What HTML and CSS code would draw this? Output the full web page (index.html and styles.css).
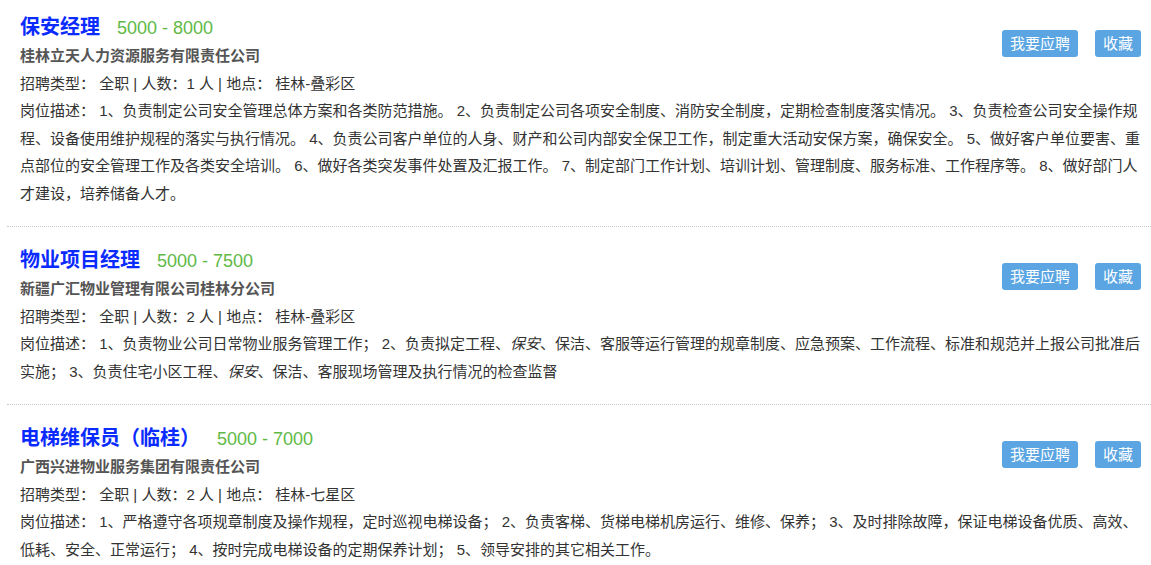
FILE: index.html
```html
<!DOCTYPE html>
<html lang="zh-CN">
	<head>
		<meta charset="UTF-8"/>
		<meta name="viewport" content="width=device-width, initial-scale=1.0"/>
		<title>招聘信息</title>
		<link rel="stylesheet" href="styles.css">
	</head>
	<body>
	  <ul class="job-list">
		<li class="job">
		  <div class="job-actions">
			<a href="#" class="btn">我要应聘</a>
			<a href="#" class="btn">收藏</a>
		  </div>
		  <div class="job-head">
			<a href="#" class="job-title">保安经理</a>
			<span class="job-salary">5000 - 8000</span>
		  </div>
		  <div class="job-company">桂林立天人力资源服务有限责任公司</div>
		  <div class="job-meta">招聘类型： 全职 | 人数：1 人 | 地点： 桂林-叠彩区</div>
		  <div class="job-desc">岗位描述： 1、负责制定公司安全管理总体方案和各类防范措施。 2、负责制定公司各项安全制度、消防安全制度，定期检查制度落实情况。 3、负责检查公司安全操作规程、设备使用维护规程的落实与执行情况。 4、负责公司客户单位的人身、财产和公司内部安全保卫工作，制定重大活动安保方案，确保安全。 5、做好客户单位要害、重点部位的安全管理工作及各类安全培训。 6、做好各类突发事件处置及汇报工作。 7、制定部门工作计划、培训计划、管理制度、服务标准、工作程序等。 8、做好部门人才建设，培养储备人才。</div>
		</li>
		<li class="job">
		  <div class="job-actions">
			<a href="#" class="btn">我要应聘</a>
			<a href="#" class="btn">收藏</a>
		  </div>
		  <div class="job-head">
			<a href="#" class="job-title">物业项目经理</a>
			<span class="job-salary">5000 - 7500</span>
		  </div>
		  <div class="job-company">新疆广汇物业管理有限公司桂林分公司</div>
		  <div class="job-meta">招聘类型： 全职 | 人数：2 人 | 地点： 桂林-叠彩区</div>
		  <div class="job-desc">岗位描述： 1、负责物业公司日常物业服务管理工作； 2、负责拟定工程、<em>保安</em>、保洁、客服等运行管理的规章制度、应急预案、工作流程、标准和规范并上报公司批准后实施； 3、负责住宅小区工程、<em>保安</em>、保洁、客服现场管理及执行情况的检查监督</div>
		</li>
		<li class="job">
		  <div class="job-actions">
			<a href="#" class="btn">我要应聘</a>
			<a href="#" class="btn">收藏</a>
		  </div>
		  <div class="job-head">
			<a href="#" class="job-title">电梯维保员（临桂）</a>
			<span class="job-salary">5000 - 7000</span>
		  </div>
		  <div class="job-company">广西兴进物业服务集团有限责任公司</div>
		  <div class="job-meta">招聘类型： 全职 | 人数：2 人 | 地点： 桂林-七星区</div>
		  <div class="job-desc">岗位描述： 1、严格遵守各项规章制度及操作规程，定时巡视电梯设备； 2、负责客梯、货梯电梯机房运行、维修、保养； 3、及时排除故障，保证电梯设备优质、高效、低耗、安全、正常运行； 4、按时完成电梯设备的定期保养计划； 5、领导安排的其它相关工作。</div>
		</li>
	  </ul>
	</body>
</html>
```

FILE: styles.css
```css
* {
  box-sizing: border-box;
}
body {
  margin: 0;
  font-family: "Liberation Sans", "Noto Sans CJK SC", sans-serif;
  font-size: 15px;
  color: #333;
  background: #fff;
}
.job-list {
  list-style: none;
  margin: 0 0 0 7px;
  padding: 0;
}
.job {
  padding: 18px 10px 19px 13px;
  border-bottom: 1px dotted #c8c8c8;
  line-height: 27.5px;
}
.job:first-child {
  padding-top: 12px;
}
.job-actions {
  float: right;
  display: flex;
  gap: 17px;
  margin-top: 18px;
}
.btn {
  display: block;
  height: 27px;
  line-height: 27px;
  padding: 0 8px;
  border-radius: 3px;
  background: #5aa5e2;
  color: #fff;
  text-decoration: none;
}
.job-head {
  display: flex;
  align-items: baseline;
  gap: 17px;
  height: 30px;
  line-height: 30px;
}
.job-title {
  font-size: 20px;
  font-weight: bold;
  color: #0a2bff;
  text-decoration: none;
}
.job-salary {
  font-size: 18px;
  color: #5fb946;
}
.job-company {
  font-weight: bold;
  color: #555;
}
.job-desc em {
  font-style: italic;
}
```
